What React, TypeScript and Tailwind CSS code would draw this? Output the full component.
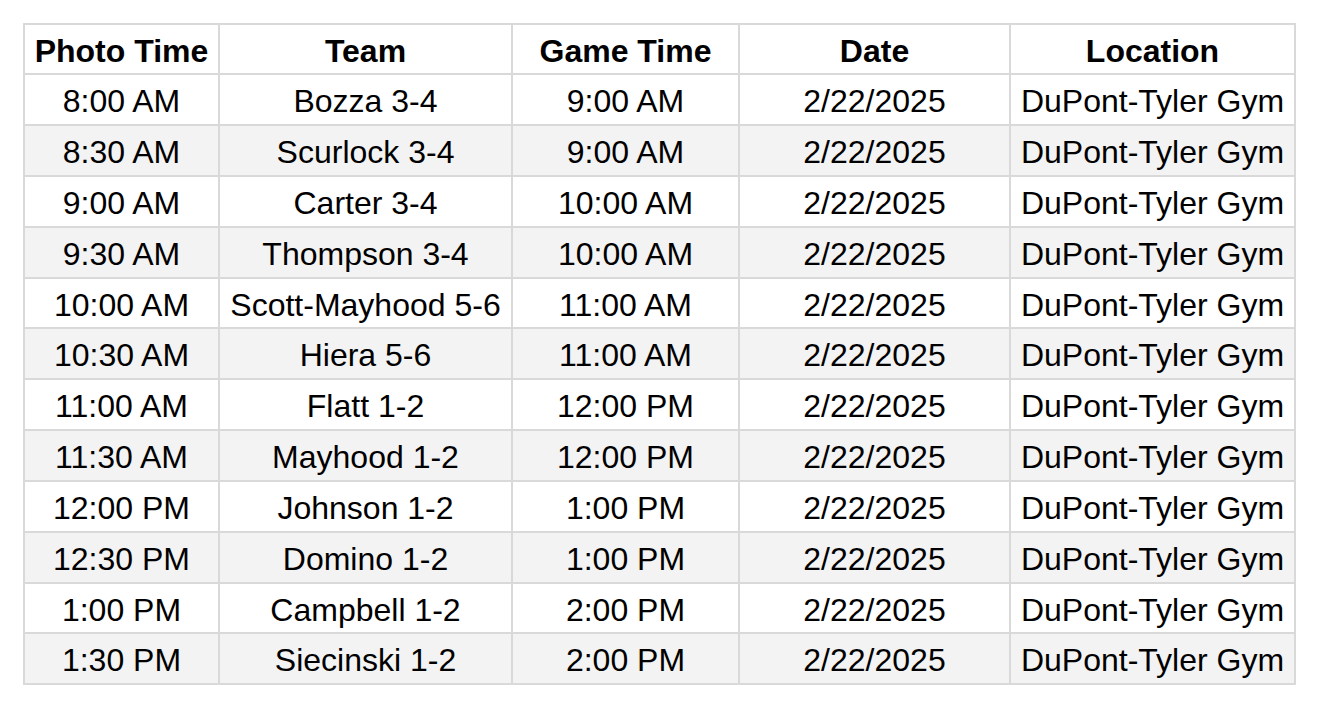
const rows = [
  ['8:00 AM', 'Bozza 3-4', '9:00 AM'],
  ['8:30 AM', 'Scurlock 3-4', '9:00 AM'],
  ['9:00 AM', 'Carter 3-4', '10:00 AM'],
  ['9:30 AM', 'Thompson 3-4', '10:00 AM'],
  ['10:00 AM', 'Scott-Mayhood 5-6', '11:00 AM'],
  ['10:30 AM', 'Hiera 5-6', '11:00 AM'],
  ['11:00 AM', 'Flatt 1-2', '12:00 PM'],
  ['11:30 AM', 'Mayhood 1-2', '12:00 PM'],
  ['12:00 PM', 'Johnson 1-2', '1:00 PM'],
  ['12:30 PM', 'Domino 1-2', '1:00 PM'],
  ['1:00 PM', 'Campbell 1-2', '2:00 PM'],
  ['1:30 PM', 'Siecinski 1-2', '2:00 PM'],
];

const headers = ['Photo Time', 'Team', 'Game Time', 'Date', 'Location'];

export default function App() {
  return (
    <div className="min-h-screen bg-white pl-[23px] pt-[23px] font-['Liberation_Sans',Arial,sans-serif] text-black">
      <table className="w-[1271px] table-fixed border-collapse border-2 border-[#d9d9d9] text-[32px]">
        <colgroup>
          <col className="w-[195px]" />
          <col className="w-[293px]" />
          <col className="w-[227px]" />
          <col className="w-[271px]" />
          <col className="w-[285px]" />
        </colgroup>
        <thead>
          <tr className="h-[50px]">
            {headers.map((h) => (
              <th key={h} className="border-2 border-[#d9d9d9] px-0 pb-0 pt-[3px] text-center font-bold leading-none">
                {h}
              </th>
            ))}
          </tr>
        </thead>
        <tbody>
          {rows.map((r, i) => (
            <tr
              key={r[0]}
              className={`${i === 4 || i === 10 ? 'h-[50px]' : 'h-[51px]'} ${i % 2 === 1 ? 'bg-[#f3f3f3]' : 'bg-white'}`}
            >
              <td className="border-2 border-[#d9d9d9] px-0 pb-0 pt-[3px] text-center leading-none">{r[0]}</td>
              <td className="border-2 border-[#d9d9d9] px-0 pb-0 pt-[3px] text-center leading-none whitespace-nowrap">{r[1]}</td>
              <td className="border-2 border-[#d9d9d9] px-0 pb-0 pt-[3px] text-center leading-none">{r[2]}</td>
              <td className="border-2 border-[#d9d9d9] px-0 pb-0 pt-[3px] text-center leading-none">2/22/2025</td>
              <td className="border-2 border-[#d9d9d9] px-0 pb-0 pt-[3px] text-center leading-none whitespace-nowrap">DuPont-Tyler Gym</td>
            </tr>
          ))}
        </tbody>
      </table>
    </div>
  );
}
